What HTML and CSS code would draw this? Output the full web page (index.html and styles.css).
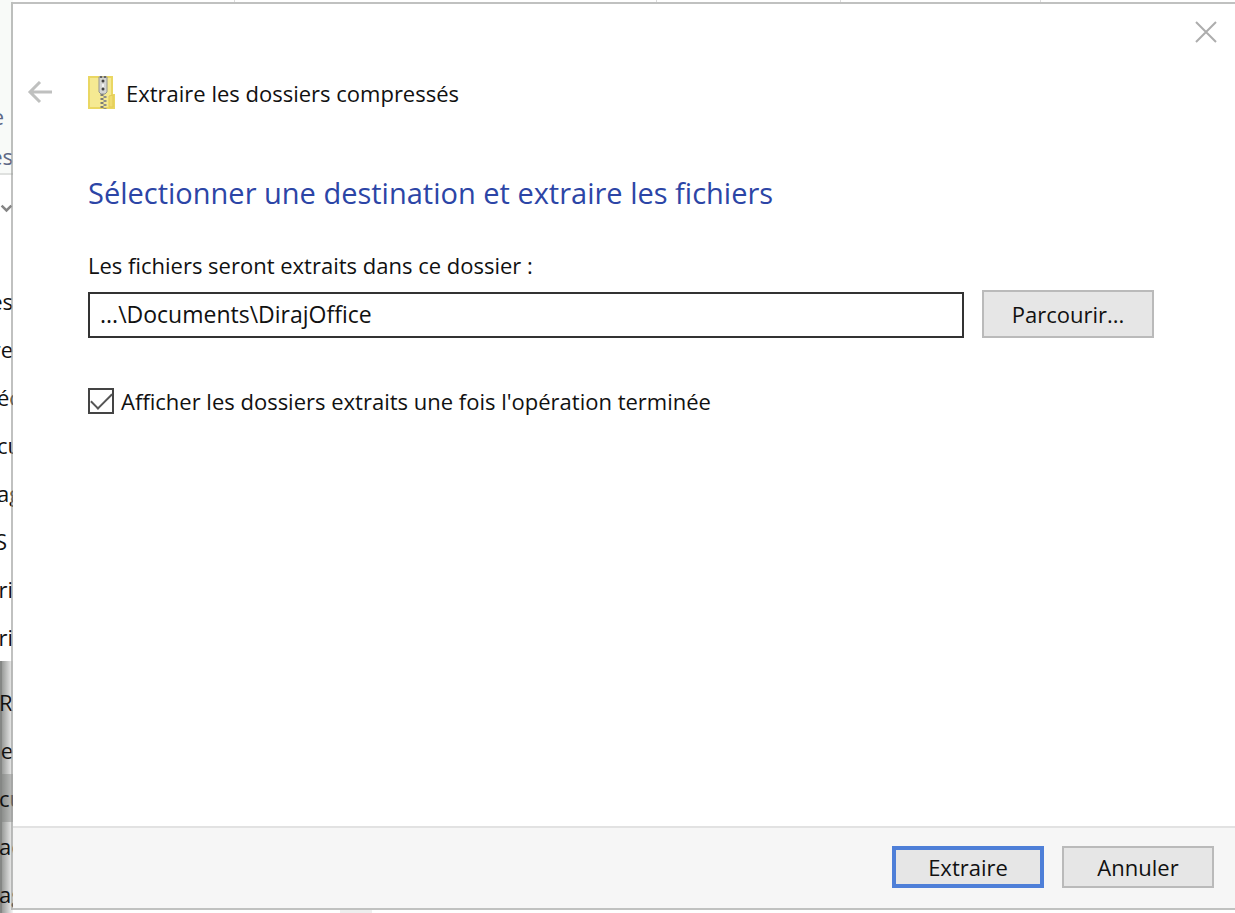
FILE: index.html
```html
<!DOCTYPE html>
<html lang="fr">
<head>
    <meta charset="UTF-8">
    <meta name="viewport" content="width=device-width, initial-scale=1.0">
    <title>Extraire les dossiers compressés</title>
    <link rel="stylesheet" href="styles.css">
</head>
<body>
    <div class="explorer">
        <div class="ribbon">
            <span class="ribbon-text short">e</span>
            <span class="ribbon-text">es</span>
        </div>
        <div class="address">
            <svg width="16" height="10" viewBox="0 0 16 10"><path d="M2 2l6 6 6-6" fill="none" stroke="#858585" stroke-width="3"/></svg>
        </div>
        <ul class="tree">
            <li>es</li>
            <li>re</li>
            <li class="cut">éc</li>
            <li class="cut">cu</li>
            <li class="cut">ag</li>
            <li class="short">S</li>
            <li>ri</li>
            <li>ri</li>
        </ul>
        <ul class="tree front">
            <li class="cut">R</li>
            <li>e</li>
            <li class="cut selected">cu</li>
            <li class="cut">ac</li>
            <li class="cut">ag</li>
        </ul>
    </div>

    <main class="window">
        <div class="columns"><i></i><i></i><i></i><i></i></div>
        <form class="dialog">
            <div class="titlebar">
                <button type="button" class="icon-btn" aria-label="Fermer">
                    <svg width="22" height="22" viewBox="0 0 22 22"><path d="M1 1l20 20M21 1L1 21" fill="none" stroke="#adadad" stroke-width="2"/></svg>
                </button>
            </div>
            <div class="header">
                <button type="button" class="icon-btn" aria-label="Précédent">
                    <svg width="26" height="24" viewBox="0 0 26 24"><path d="M25 11H3M13 1L3 11l10 10" fill="none" stroke="#bfc0bf" stroke-width="3"/></svg>
                </button>
                <svg class="zip" width="27" height="33" viewBox="0 0 27 33">
                    <path d="M1 1h23v18h2v13H1z" fill="#f5e992" stroke="#ead763" stroke-width="2"/>
                    <path d="M21 31V20l4-1v12z" fill="#f0dc70" stroke="#e3cb55"/>
                    <path d="M11 1h8v15l-2 2h-4l-2-2z" fill="#d4d5d3" stroke="#94958f"/>
                    <path d="M12 1h7" stroke="#666" stroke-width="2" stroke-dasharray="2 2"/>
                    <circle cx="15" cy="5" r="1.500" fill="#444"/>
                    <circle cx="15" cy="13" r="1.500" fill="#444"/>
                    <path d="M15 8v3" stroke="#f3f3f3" stroke-width="2"/>
                    <path d="M14 18v14" stroke="#7c7c78" stroke-width="3" stroke-dasharray="2 2"/>
                    <path d="M17 20v13" stroke="#8e8e8a" stroke-width="3" stroke-dasharray="2 2"/>
                </svg>
                <span>Extraire les dossiers compressés</span>
            </div>
            <div class="content">
                <h1>Sélectionner une destination et extraire les fichiers</h1>
                <label for="path">Les fichiers seront extraits dans ce dossier :</label>
                <div class="path-row">
                    <input type="text" id="path" value="...\Documents\DirajOffice">
                    <button type="button" class="browse">Parcourir...</button>
                </div>
                <div class="check-row">
                    <input type="checkbox" id="show" checked>
                    <label for="show">Afficher les dossiers extraits une fois l'opération terminée</label>
                </div>
            </div>
            <div class="footer">
                <button type="submit" class="primary">Extraire</button>
                <button type="button">Annuler</button>
            </div>
        </form>
        <div class="status"></div>
    </main>
</body>
</html>
```
FILE: styles.css
```css
* {
    box-sizing: border-box;
}

body {
    margin: 0;
    min-height: 100vh;
    display: flex;
    font-family: "Open Sans", "Segoe UI", sans-serif;
    font-size: 22px;
    line-height: 32px;
    color: #111;
    background-color: white;
}

/* strip of the explorer window behind the dialog */
.explorer {
    flex: none;
    width: 13px;
    height: 100vh;
    overflow: hidden;
}

.ribbon {
    height: 175px;
    padding-top: 100px;
    background-color: #f8faf8;
    border-bottom: 2px solid #dfe1df;
    color: #5d6887;
}

.ribbon-text,
.tree li {
    display: flex;
    align-items: center;
    justify-content: flex-end;
    height: 48px;
}

.ribbon-text {
    height: 40px;
    align-items: flex-start;
}

.ribbon .short {
    padding-right: 9px;
}

.address {
    display: flex;
    align-items: center;
    justify-content: flex-end;
    height: 66px;
}

.tree {
    list-style: none;
    margin: 0;
    padding: 36px 0 0;
}

.tree .short {
    padding-right: 6px;
}

.tree .cut {
    justify-content: flex-start;
    text-indent: -3px;
}

.front {
    padding-top: 17px;
    border-left: 2px solid #858785;
    background: linear-gradient(to right, #9a9c9a, #f4f4f4);
}

.front .selected {
    background-color: rgba(120, 122, 120, 0.4);
}

.window {
    flex: 1;
    min-width: 0;
    height: 100vh;
    margin-left: -2px;
    display: flex;
    flex-direction: column;
}

.columns {
    display: grid;
    grid-template-columns: 224px 422px 184px 200px;
    height: 2px;
}

.columns i {
    border-right: 1px solid #dcdcdc;
}

.dialog {
    flex: 1;
    display: flex;
    flex-direction: column;
    border: 2px solid rgba(150, 152, 150, 0.6);
    border-right: none;
    background-color: white;
    background-clip: padding-box;
}

.titlebar {
    display: flex;
    justify-content: flex-end;
    padding: 17px 18px 0 0;
}

.icon-btn {
    display: flex;
    padding: 0;
    border: none;
    background: none;
}

.header {
    display: flex;
    align-items: center;
    margin-top: 33px;
    padding-left: 14px;
}

.zip {
    margin: 0 11px 0 35px;
}

.content {
    flex: 1;
    padding: 64px 81px 0 75px;
}

h1 {
    margin: 0 0 36px;
    font-size: 29px;
    font-weight: normal;
    line-height: 40px;
    color: #2c45a6;
}

.content label {
    display: block;
}

.path-row {
    display: flex;
    align-items: flex-end;
    gap: 18px;
    margin-top: 9px;
}

input[type="text"] {
    flex: 1;
    min-width: 0;
    height: 46px;
    padding: 0 10px 2px;
    border: 2px solid #333;
    font: inherit;
    font-size: 23px;
    color: inherit;
}

.check-row {
    display: flex;
    align-items: center;
    gap: 7px;
    margin-top: 47px;
}

input[type="checkbox"] {
    appearance: none;
    width: 26px;
    height: 26px;
    margin: 0;
    border: 2px solid #444;
    display: flex;
    align-items: center;
    justify-content: center;
}

input[type="checkbox"]:checked::before {
    content: "";
    width: 19px;
    height: 9px;
    border-left: 2px solid #555;
    border-bottom: 2px solid #555;
    transform: translateY(-3px) rotate(-45deg);
}

.browse,
.footer button {
    width: 152px;
    height: 42px;
    padding: 0;
    border: 2px solid #bababa;
    background-color: #e6e6e6;
    font: inherit;
    color: inherit;
}

.browse {
    width: 172px;
    height: 48px;
}

.footer {
    display: flex;
    justify-content: flex-end;
    gap: 18px;
    padding: 18px 21px 20px;
    border-top: 2px solid #e2e2e2;
    background-color: #f6f6f6;
}

.footer .primary {
    border: 4px solid #4e7fd8;
}

.status {
    width: 32px;
    height: 3px;
    margin-left: 329px;
    background-color: #eee;
}
```
